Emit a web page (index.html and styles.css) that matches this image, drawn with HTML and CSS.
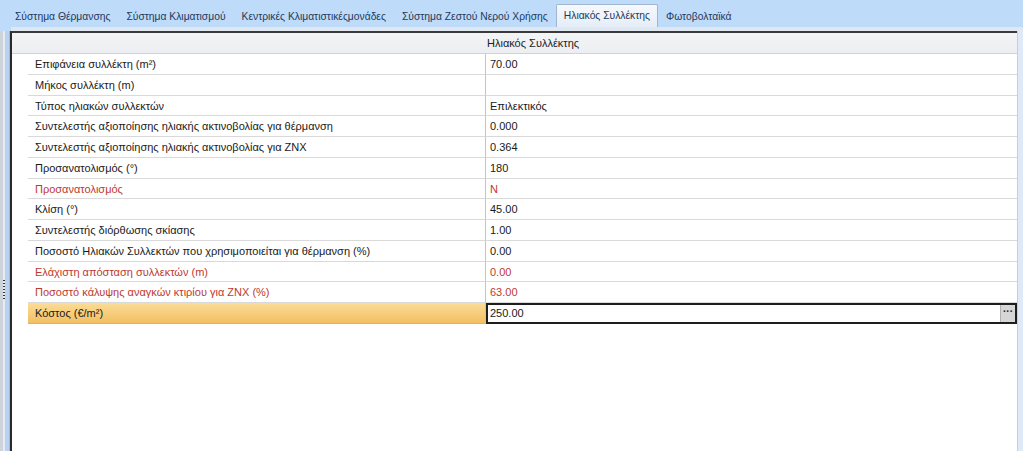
FILE: index.html
```html
<!DOCTYPE html>
<html lang="el">
<head>
<meta charset="utf-8">
<title>Ηλιακός Συλλέκτης</title>
<link rel="stylesheet" href="styles.css">
</head>
<body>
<div class="window">
  <div class="tabs">
    <div class="tab">Σύστημα Θέρμανσης</div>
    <div class="tab">Σύστημα Κλιματισμού</div>
    <div class="tab">Κεντρικές Κλιματιστικέςμονάδες</div>
    <div class="tab">Σύστημα Ζεστού Νερού Χρήσης</div>
    <div class="tab active">Ηλιακός Συλλέκτης</div>
    <div class="tab">Φωτοβολταϊκά</div>
  </div>
  <div class="band"></div>
  <div class="main">
    <div class="leftstrip"><div class="grip"></div></div>
    <div class="panel">
      <div class="grid">
        <div class="hdr"><div class="hdr-gap"></div><div class="hdr-label"></div><div class="hdr-val">Ηλιακός Συλλέκτης</div></div>
        <div class="row"><div class="gut"></div><div class="lab">Επιφάνεια συλλέκτη (m²)</div><div class="val">70.00</div></div>
        <div class="row"><div class="gut"></div><div class="lab">Μήκος συλλέκτη (m)</div><div class="val"></div></div>
        <div class="row"><div class="gut"></div><div class="lab">Τύπος ηλιακών συλλεκτών</div><div class="val">Επιλεκτικός</div></div>
        <div class="row"><div class="gut"></div><div class="lab">Συντελεστής αξιοποίησης ηλιακής ακτινοβολίας για θέρμανση</div><div class="val">0.000</div></div>
        <div class="row"><div class="gut"></div><div class="lab">Συντελεστής αξιοποίησης ηλιακής ακτινοβολίας για ΖΝΧ</div><div class="val">0.364</div></div>
        <div class="row"><div class="gut"></div><div class="lab">Προσανατολισμός (°)</div><div class="val">180</div></div>
        <div class="row red"><div class="gut"></div><div class="lab">Προσανατολισμός</div><div class="val">N</div></div>
        <div class="row"><div class="gut"></div><div class="lab">Κλίση (°)</div><div class="val">45.00</div></div>
        <div class="row"><div class="gut"></div><div class="lab">Συντελεστής διόρθωσης σκίασης</div><div class="val">1.00</div></div>
        <div class="row"><div class="gut"></div><div class="lab">Ποσοστό Ηλιακών Συλλεκτών που χρησιμοποιείται για θέρμανση (%)</div><div class="val">0.00</div></div>
        <div class="row red"><div class="gut"></div><div class="lab">Ελάχιστη απόσταση συλλεκτών (m)</div><div class="val">0.00</div></div>
        <div class="row red"><div class="gut"></div><div class="lab">Ποσοστό κάλυψης αναγκών κτιρίου για ΖΝΧ (%)</div><div class="val">63.00</div></div>
        <div class="row sel"><div class="gut"></div><div class="lab">Κόστος (€/m²)</div><div class="val"><span class="vtext">250.00</span><span class="dots">···</span></div></div>
      </div>
    </div>
    <div class="rightstrip"></div>
  </div>
</div>
</body>
</html>
```

FILE: styles.css
```css
* { box-sizing: border-box; }
html, body { margin: 0; padding: 0; }
body {
  width: 1023px;
  height: 451px;
  overflow: hidden;
  background: #bfdbfa;
  font-family: "Liberation Sans", Arial, sans-serif;
  font-size: 11px;
  color: #1a1a1a;
}
.window { display: flex; flex-direction: column; height: 451px; }
.tabs {
  display: flex;
  align-items: flex-end;
  height: 27px;
  padding-left: 7px;
  background: #bfdbfa;
}
.tab {
  height: 22px;
  line-height: 22px;
  padding: 0 7px;
  font-size: 10.3px;
  color: #22395a;
  white-space: nowrap;
  border: 1px solid transparent;
  border-bottom: none;
}
.active {
  background: linear-gradient(#f6f9fd, #e4edf8);
  border-color: #9fb5d0;
  border-radius: 2px 2px 0 0;
  height: 23px;
}
.band { height: 4px; background: #dfe7f1; border-left: 11px solid #bfdbfa; }
.main { display: flex; flex: 1; }
.leftstrip {
  width: 10px;
  background: linear-gradient(90deg, #cfd3da 0 3px, #e4ecf6 3px 5px, #b9d2f2 5px 9px, #9fb9dd 9px 10px);
  position: relative;
}
.grip {
  position: absolute;
  left: 3px;
  top: 249px;
  width: 2px;
  height: 20px;
  background: repeating-linear-gradient(#333 0 1px, transparent 1px 3px);
}
.rightstrip { width: 6px; background: linear-gradient(90deg, #c9cfd8 0 1px, #dfe9f7 1px); }
.panel {
  flex: 1;
  background: #fff;
  border-left: 2px solid #2a2a2a;
  border-top: 2px solid #3a3a3a;
}
.grid { display: flex; flex-direction: column; }
.hdr {
  display: flex;
  height: 21px;
  background: linear-gradient(#f3f4f6, #eceef1);
  border-bottom: 1px solid #cfd2d6;
}
.hdr-gap { width: 16px; }
.hdr-label { width: 458px; }
.hdr-val { flex: 1; line-height: 20px; padding-left: 1px; color: #222; }
.row {
  display: flex;
  height: 20.75px;
}
.gut { width: 16px; flex: none; background: #fff; }
.lab {
  width: 458px;
  flex: none;
  padding-left: 7px;
  line-height: 20px;
  border-bottom: 1px solid #d9d9d9;
  border-right: 1px solid #c4c4c4;
  white-space: nowrap;
  overflow: hidden;
}
.val {
  flex: 1;
  padding-left: 4px;
  line-height: 20px;
  border-bottom: 1px solid #d9d9d9;
  white-space: nowrap;
}
.red .lab, .red .val { color: #c0392f; }
.sel .lab {
  background: linear-gradient(#fbdc98, #f3bf62);
  border-bottom: 1px solid #e8b050;
}
.sel .val {
  display: flex;
  justify-content: space-between;
  border: 2px solid #1e1e1e;
  padding-left: 2px;
  line-height: 17px;
}
.dots {
  width: 15px;
  background: #d6d6d6;
  border-left: 1px solid #b0b0b0;
  text-align: center;
  line-height: 14px;
  font-size: 10px;
  color: #222;
  font-weight: bold;
}
```
